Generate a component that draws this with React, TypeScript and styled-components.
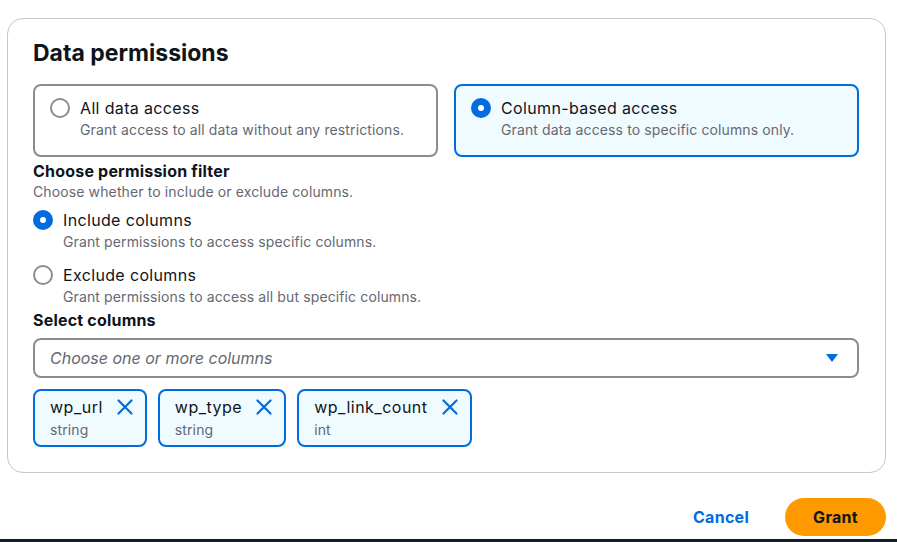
import React from "react";
import styled, { createGlobalStyle } from "styled-components";

const Global = createGlobalStyle`
  html, body { margin: 0; padding: 0; background: #ffffff; }
  body { font-family: Inter, "Open Sans", sans-serif; color: #0f141a; }
  * { box-sizing: border-box; }
`;

const Page = styled.div`
  width: 897px;
  height: 542px;
  display: flex;
  flex-direction: column;
  overflow: hidden;
`;

const Main = styled.div`
  flex: 1;
  padding: 18px 11px 0 7px;
  display: flex;
  flex-direction: column;
`;

const Card = styled.section`
  border: 1px solid #c6c6cd;
  border-radius: 16px;
  padding: 19px 26px 25px 25px;
  display: flex;
  flex-direction: column;
`;

const Heading = styled.h2`
  margin: 0 0 16px;
  font-size: 23px;
  line-height: 30px;
  font-weight: 700;
  color: #0f141a;
`;

const Tiles = styled.div`
  display: grid;
  grid-template-columns: 1fr 1fr;
  gap: 16px;
`;

const Tile = styled.div<{ $selected?: boolean }>`
  border: 2px solid ${(p) => (p.$selected ? "#006ce0" : "#8c8c94")};
  background: ${(p) => (p.$selected ? "#f0fbff" : "#ffffff")};
  border-radius: 8px;
  padding: 11px 15px 14px;
  display: flex;
  gap: 10px;
  align-items: flex-start;
`;

const Radio = styled.span<{ $checked?: boolean }>`
  flex: none;
  width: 20px;
  height: 20px;
  margin-top: 1px;
  border-radius: 50%;
  border: ${(p) => (p.$checked ? "7px solid #006ce0" : "2px solid #8c8c94")};
  background: #ffffff;
`;

const OptionText = styled.div`
  display: flex;
  flex-direction: column;
`;

const Label = styled.span`
  font-size: 16px;
  line-height: 22px;
  letter-spacing: 0.35px;
  color: #0f141a;
`;

const Desc = styled.span`
  font-size: 14px;
  line-height: 22px;
  letter-spacing: 0.12px;
  color: #656871;
`;

const FieldLabel = styled.div<{ $gap: number }>`
  margin-top: ${(p) => p.$gap}px;
  font-size: 16px;
  line-height: 20px;
  font-weight: 700;
  letter-spacing: 0.2px;
  color: #0f141a;
`;

const FieldDesc = styled.div`
  font-size: 14px;
  line-height: 20px;
  letter-spacing: 0.12px;
  color: #656871;
  margin-top: 1px;
`;

const RadioRow = styled.div<{ $first?: boolean }>`
  display: flex;
  gap: 10px;
  align-items: flex-start;
  margin-top: ${(p) => (p.$first ? "7px" : "11px")};
`;

const Select = styled.div`
  margin-top: 8px;
  height: 40px;
  border: 2px solid #8c8c94;
  border-radius: 8px;
  padding: 0 18px 0 15px;
  display: flex;
  align-items: center;
  justify-content: space-between;
`;

const Placeholder = styled.span`
  font-size: 16px;
  font-style: italic;
  color: #656871;
`;

const Tokens = styled.div`
  margin-top: 11px;
  display: flex;
  gap: 11px;
`;

const Token = styled.div`
  border: 2px solid #006ce0;
  background: #f0fbff;
  border-radius: 8px;
  padding: 5px 12px 4px 15px;
  display: flex;
  gap: 14px;
  align-items: flex-start;
`;

const TokenText = styled.div`
  display: flex;
  flex-direction: column;
`;

const TokenName = styled.span`
  font-size: 16px;
  line-height: 22px;
  letter-spacing: 0.5px;
  color: #0f141a;
`;

const TokenType = styled.span`
  font-size: 14px;
  line-height: 23px;
  letter-spacing: 0.12px;
  color: #656871;
`;

const Dismiss = styled.button`
  border: none;
  background: none;
  padding: 0;
  margin-top: 3px;
  width: 16px;
  height: 16px;
  display: flex;
  cursor: pointer;
`;

const Actions = styled.div`
  margin-top: 25px;
  display: flex;
  justify-content: flex-end;
  align-items: center;
  gap: 17px;
`;

const LinkButton = styled.button`
  border: none;
  background: none;
  font-family: inherit;
  font-size: 16px;
  font-weight: 700;
  letter-spacing: 0.3px;
  color: #006ce0;
  padding: 4px 19px;
  cursor: pointer;
`;

const PrimaryButton = styled.button`
  border: none;
  background: #ff9900;
  color: #0f141a;
  font-family: inherit;
  font-size: 16px;
  font-weight: 700;
  letter-spacing: 0.3px;
  height: 38px;
  padding: 0 28px;
  border-radius: 19px;
  cursor: pointer;
`;

const Footer = styled.div`
  margin-top: 3px;
  height: 4px;
  background: #161d26;
`;

const XIcon = () => (
  <svg width="16" height="16" viewBox="0 0 16 16">
    <path d="M1.5 1.5 L14.5 14.5 M14.5 1.5 L1.5 14.5" stroke="#006ce0" strokeWidth="2.2" strokeLinecap="round" fill="none" />
  </svg>
);

const Caret = () => (
  <svg width="14" height="10" viewBox="0 0 14 10">
    <path d="M1 1 H13 L7 9 Z" fill="#006ce0" />
  </svg>
);

const columns = [
  { name: "wp_url", type: "string" },
  { name: "wp_type", type: "string" },
  { name: "wp_link_count", type: "int" },
];

export default function App() {
  return (
    <Page>
      <Global />
      <Main>
        <Card>
          <Heading>Data permissions</Heading>
          <Tiles>
            <Tile>
              <Radio />
              <OptionText>
                <Label>All data access</Label>
                <Desc>Grant access to all data without any restrictions.</Desc>
              </OptionText>
            </Tile>
            <Tile $selected>
              <Radio $checked />
              <OptionText>
                <Label>Column-based access</Label>
                <Desc>Grant data access to specific columns only.</Desc>
              </OptionText>
            </Tile>
          </Tiles>
          <FieldLabel $gap={4}>Choose permission filter</FieldLabel>
          <FieldDesc>Choose whether to include or exclude columns.</FieldDesc>
          <RadioRow $first>
            <Radio $checked />
            <OptionText>
              <Label>Include columns</Label>
              <Desc>Grant permissions to access specific columns.</Desc>
            </OptionText>
          </RadioRow>
          <RadioRow>
            <Radio />
            <OptionText>
              <Label>Exclude columns</Label>
              <Desc>Grant permissions to access all but specific columns.</Desc>
            </OptionText>
          </RadioRow>
          <FieldLabel $gap={2}>Select columns</FieldLabel>
          <Select>
            <Placeholder>Choose one or more columns</Placeholder>
            <Caret />
          </Select>
          <Tokens>
            {columns.map((c) => (
              <Token key={c.name}>
                <TokenText>
                  <TokenName>{c.name}</TokenName>
                  <TokenType>{c.type}</TokenType>
                </TokenText>
                <Dismiss aria-label={`Remove ${c.name}`}>
                  <XIcon />
                </Dismiss>
              </Token>
            ))}
          </Tokens>
        </Card>
        <Actions>
          <LinkButton>Cancel</LinkButton>
          <PrimaryButton>Grant</PrimaryButton>
        </Actions>
      </Main>
      <Footer />
    </Page>
  );
}
